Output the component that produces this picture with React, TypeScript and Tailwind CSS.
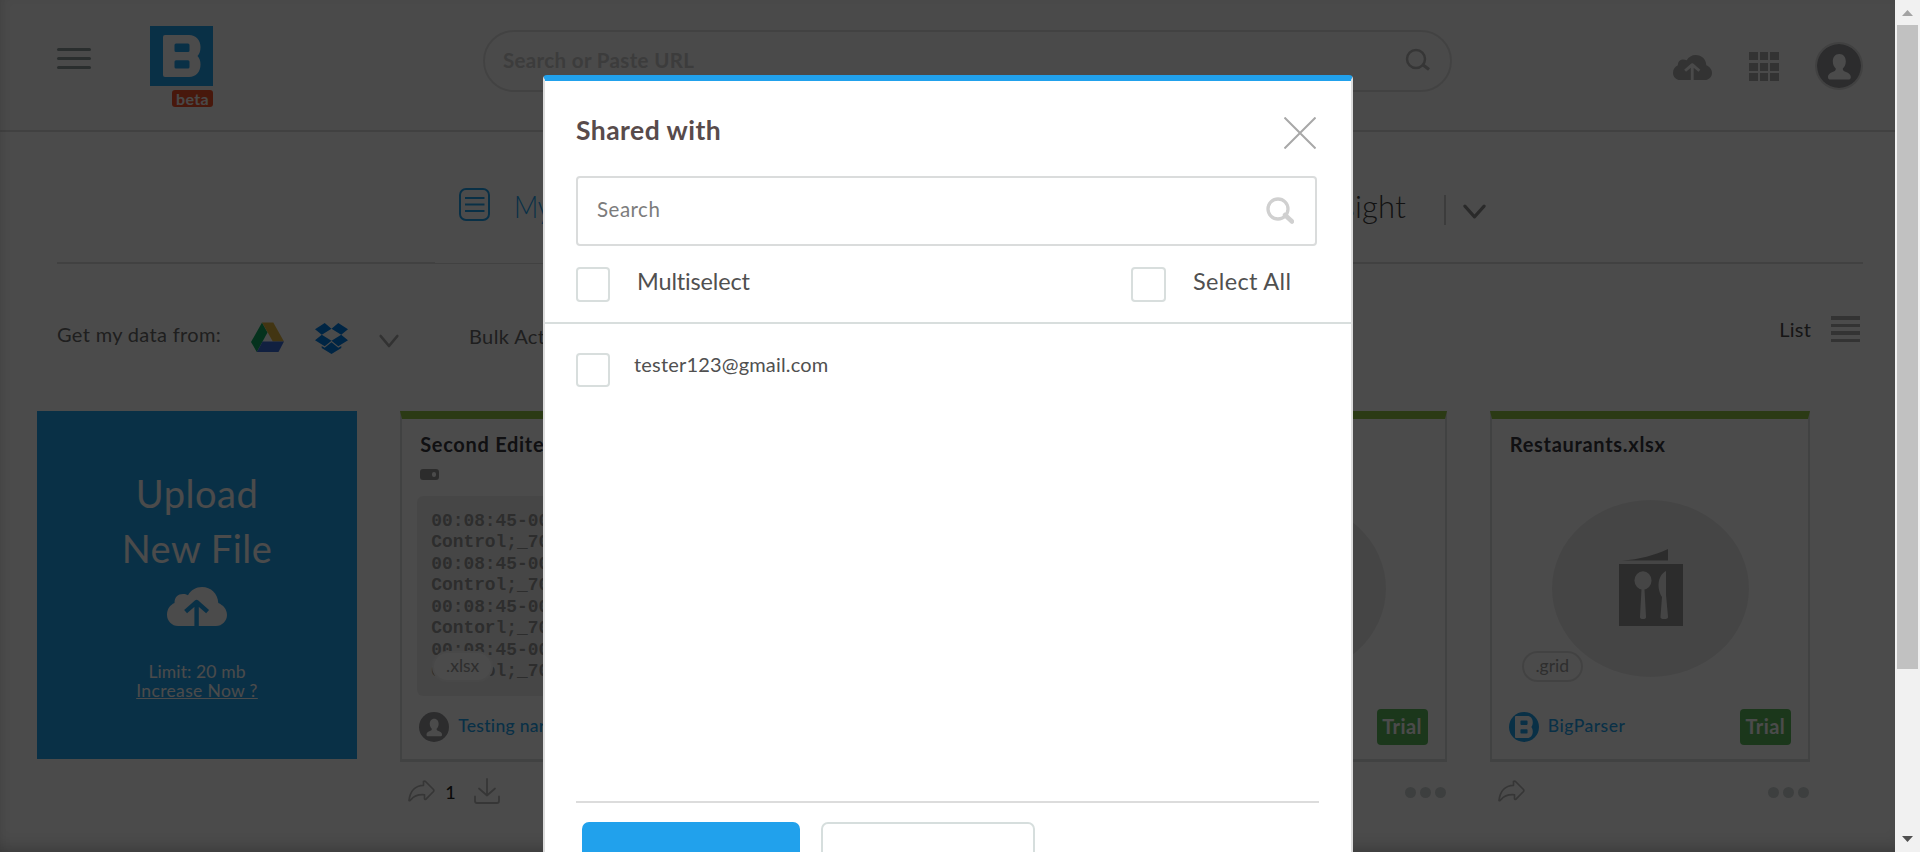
import React from "react";

const CloudIcon = ({ className, arrow }: { className: string; arrow: string }) => (
  <svg className={className} viewBox="0 0 60 39" fill="currentColor" preserveAspectRatio="none">
    <path d="M11 39C5 39 0 34 0 28C0 22 3 18 7.5 16C7.5 10 11 7 16 7C18 7 19.5 7.3 21 8.2C24 3 29 0 35 0C44 0 50.8 6.5 51.3 16C56 18 60 22 60 28C60 34 55 39 49 39Z" />
    <path d="M29.6 39.5V16M18.6 24.6L29.6 15L40.6 24.6" fill="none" stroke={arrow} strokeWidth="4.4" strokeLinecap="butt" strokeLinejoin="round" />
  </svg>
);

const UserIcon = ({ className }: { className: string }) => (
  <svg className={className} viewBox="0 0 44 44" preserveAspectRatio="none">
    <circle cx="22" cy="22" r="22" fill="#939397" />
    <path d="M22.3 10C18 10 15.8 13.4 15.8 17.5C15.8 20.7 17.3 23 18.8 24.6C18.8 26 18.4 27 16.8 27.6C13.4 29 11 30.2 11 33.2C11 34.8 12 35.6 13.6 35.6H31C32.8 35.6 33.8 34.8 33.8 33.2C33.8 30.2 31.2 29 27.8 27.6C26.2 27 25.8 26 25.8 24.6C27.4 23 28.8 20.7 28.8 17.5C28.8 13.4 26.6 10 22.3 10Z" fill="#fbfbfb" />
  </svg>
);

const LogoMark = ({ className }: { className: string }) => (
  <svg className={className} viewBox="0 0 38 42" fill="#fbfbfb" fillRule="evenodd" preserveAspectRatio="none">
    <path d="M2 0H26C33 0 37.5 5 37.5 12C37.5 16 36.5 19 34.5 21C36.5 23 37.5 26 37.5 29.500C37.500 37 33 42 26 42H2Q0 42 0 40V2Q0 0 2 0ZM13 8.500Q11.500 8.500 11.500 10V15.500Q11.500 17 13 17H25Q26.500 17 26.500 15.500V10Q26.500 8.500 25 8.500ZM13 25.200Q11.500 25.200 11.500 26.700V32Q11.500 33.500 13 33.500H25Q26.500 33.500 26.500 32V26.700Q26.500 25.200 25 25.200Z" />
  </svg>
);

const ShareIcon = () => (
  <svg className="mt-[18px] h-[22px] w-[27px]" viewBox="0 0 27 22" fill="none" stroke="#b4b4b4" strokeWidth="1.7" strokeLinejoin="round">
    <path d="M1 20.500C2 11 7.500 5.500 15.500 5.300V1.500Q16.500 0.600 17.500 1.500L25.500 9.500Q26.200 10.500 25.500 11.500L18 19.200Q16.800 20 16.500 18.800V14.800C10 14.300 6 15.800 3 19.600Q1.800 21.300 1 20.500Z" />
  </svg>
);

const Chevron = ({ className, width }: { className: string; width: number }) => (
  <svg className={className} viewBox="0 0 22 14" fill="none" stroke="currentColor" strokeWidth={width} strokeLinecap="round" strokeLinejoin="round" preserveAspectRatio="none">
    <path d="M1.800 2L11 12L20.200 2" />
  </svg>
);

const Dots = () => (
  <div className="mt-[25px] mr-px ml-auto flex gap-[4px]">
    <span className="h-[11px] w-[11px] rounded-full bg-[#cdd2d2]" />
    <span className="h-[11px] w-[11px] rounded-full bg-[#cdd2d2]" />
    <span className="h-[11px] w-[11px] rounded-full bg-[#cdd2d2]" />
  </div>
);

const Card = ({ title, children, footer, actions }: { title: string; children: React.ReactNode; footer: React.ReactNode; actions: React.ReactNode }) => (
  <div className="w-[320px] shrink-0">
    <div className="flex h-[351px] flex-col border-x-2 border-t-8 border-b-[3px] border-[#dadcdc] border-t-[#8fc146]">
      <h3 className="mt-[13px] ml-[18px] h-6 text-[20px] leading-6 font-bold tracking-[0.7px] whitespace-nowrap text-[#38383e]">{title}</h3>
      {children}
      <div className="flex h-[63px] items-start pr-[17px] pl-[17px]">{footer}</div>
    </div>
    <div className="flex items-start pl-[8px]">{actions}</div>
  </div>
);

const Trial = () => (
  <span className="mt-[13px] ml-auto flex h-9 w-[51px] justify-center rounded-[4px] bg-[#5cb85c] pt-[5px] text-[20px] leading-6 font-bold tracking-[0.4px] text-[#fafafa]">Trial</span>
);

const Dish = () => (
  <div className="relative mt-[44px] mb-[19px] flex h-[177px] justify-center pl-[2px]">
    <div className="flex h-[177px] w-[197px] justify-center rounded-[50%] bg-[#e8e8e8] pt-[49px]">
      <svg className="h-[78px] w-[64px]" viewBox="0 0 64 78">
        <path d="M3 11.500C20 10.500 36 6 49 0V11.500ZM0 15H64V77H0Z" fill="#949494" />
        <ellipse cx="24" cy="31.500" rx="8.500" ry="9.200" fill="#e8e8e8" />
        <path d="M22.600 39H25.400L27 68Q27 70 24 70Q21 70 21 68ZM47 22V46L49 68Q49 70 45.200 70Q41.500 70 41.500 68L43 48C38 40 38 27 47 22Z" fill="#e8e8e8" />
      </svg>
    </div>
    <span className="absolute top-[151px] left-[30px] flex h-[31px] w-[61px] justify-center rounded-full border-2 border-[#dedede] bg-[#fbfbfb] pt-px text-[17.5px] leading-6 text-[#9a9a9a]">.grid</span>
  </div>
);

const logLines = ["00:08:45-00", "Control;_70", "00:08:45-00", "Control;_70", "00:08:45-00", "Contorl;_70", "00:08:45-00", "Control;_70"];

const BigParser = () => (
  <>
    <span className="mt-[16px] flex h-[30px] w-[30px] items-center justify-center rounded-full bg-[#21a1ec]">
      <LogoMark className="h-[22px] w-[18px]" />
    </span>
    <span className="mt-[18px] ml-[9px] text-[17.5px] leading-6 font-medium tracking-[0.5px] text-[#21a1ec]">BigParser</span>
    <Trial />
  </>
);

const Page = () => (
  <div className="flex h-[852px] w-[1895px] flex-col bg-[#fcfcfc]">
    <header className="flex h-[132px] shrink-0 items-start border-b-2 border-[#dadada] bg-[#f8f8f8]">
      <div className="mt-[48px] ml-[57px] flex w-[34px] flex-col gap-[6px]">
        <span className="h-[3px] rounded-full bg-[#8c9999]" />
        <span className="h-[3px] rounded-full bg-[#8c9999]" />
        <span className="h-[3px] rounded-full bg-[#8c9999]" />
      </div>
      <div className="mt-[26px] ml-[59px] flex w-[63px] flex-col items-end">
        <div className="flex h-[60px] w-[63px] justify-center bg-[#21a1ec] pt-[9px]">
          <LogoMark className="h-[42px] w-[38px]" />
        </div>
        <div className="mt-[4px] h-[17px] w-[41px] rounded-[3px] bg-[#f0522a] text-center text-[16px] leading-[17px] font-bold tracking-[0.3px] text-[#f5f5f5]">beta</div>
      </div>
      <div className="mt-[30px] ml-[270px] flex h-[62px] w-[969px] items-start justify-between rounded-full border-2 border-[#dedede] pr-[19px] pl-[18px]">
        <span className="mt-[16px] text-[20.5px] leading-6 font-bold tracking-[0.35px] text-[#c8c8c8]">Search or Paste URL</span>
        <svg className="mt-[16px] h-[24px] w-[26px]" viewBox="0 0 26 24" fill="none" stroke="#b4b4b4">
          <circle cx="11" cy="11" r="9" strokeWidth="2.500" />
          <path d="M17.500 16.500L24 21.500" strokeWidth="3.200" />
        </svg>
      </div>
      <CloudIcon className="mt-[55px] ml-[221px] h-[25px] w-[39px] text-[#aaaaaa]" arrow="#f8f8f8" />
      <div className="mt-[52px] ml-[37px] grid grid-cols-3 gap-x-[2px] gap-y-[2.5px]">
        {Array.from({ length: 9 }, (_, i) => (
          <span key={i} className="h-2 w-[8.5px] bg-[#aaaaaa]" />
        ))}
      </div>
      <div className="mt-[42px] ml-[36.500px] rounded-full border-2 border-[#dadada]">
        <UserIcon className="h-[44px] w-[44px]" />
      </div>
    </header>

    <nav className="flex h-[132px] w-full shrink-0 flex-col">
      <div className="flex h-[130px] items-start">
        <svg className="mt-[56px] ml-[459px] h-[33px] w-[31px]" viewBox="0 0 31 33" fill="none" stroke="#21a1ec" strokeWidth="2">
          <rect x="1" y="1" width="29" height="31" rx="6" />
          <path d="M6 10H25.500M6 16.500H25.500M6 23H25.500" />
        </svg>
        <span className="mt-[56px] ml-[24px] origin-left scale-x-[0.86] text-[31px] leading-9 font-light text-[#21a1ec]">My</span>
        <span className="mt-[56px] ml-auto text-[31px] leading-9 font-light tracking-[0.2px] text-[#3c3c3c]">Insight</span>
        <span className="mt-[63px] ml-[38px] h-[30px] w-[2px] bg-[#c8c8c8]" />
        <Chevron className="mt-[72px] mr-[409px] ml-[17px] h-[15px] w-[23px] text-[#8c8c8c]" width={3} />
      </div>
      <div className="mr-[32px] ml-[57px] flex h-[2px] items-end">
        <span className="h-[2px] w-[378px] bg-[#dadada]" />
        <span className="h-px w-[400px] bg-[#dadada]" />
        <span className="h-[2px] flex-1 bg-[#dadada]" />
      </div>
    </nav>

    <div className="flex h-[147px] shrink-0 items-start pl-[57px]">
      <span className="mt-[58px] w-[194px] text-[20px] leading-6 tracking-[0.34px] text-[#686868]">Get my data from:</span>
      <svg className="mt-[58px] h-[31px] w-[33px]" viewBox="0 0 33 31" preserveAspectRatio="none">
        <path d="M11 0.500L16.500 10.500L5.800 30L0 20Z" fill="#11a861" />
        <path d="M11 0.500H22.300L33 19.500H21.800Z" fill="#ddb23e" />
        <path d="M11.600 19.500H33L27.500 30H5.800Z" fill="#3b6bd8" />
      </svg>
      <svg className="mt-[59px] ml-[31px] h-[31px] w-[33px]" viewBox="0 0 33 31" fill="#007ee5" preserveAspectRatio="none">
        <path d="M9.700 0L16.500 5.700L6.800 11.700L0 6.200ZM23.300 0L16.500 5.700L26.200 11.700L33 6.200ZM0 17.200L6.800 11.700L16.500 17.800L9.700 23.300ZM33 17.200L26.200 11.700L16.500 17.800L23.300 23.300ZM16.500 19.200L23.300 24.700L26.300 22.900V25.100L16.500 31L6.700 25.100V22.900L9.700 24.700Z" />
      </svg>
      <Chevron className="mt-[70px] ml-[31px] h-[14px] w-[20px] text-[#a8a8a8]" width={2.6} />
      <span className="mt-[60px] ml-[70px] text-[20px] leading-6 tracking-[0.4px] text-[#686868]">Bulk Act</span>
      <span className="mt-[53px] ml-auto text-[20px] leading-6 tracking-[0.2px] text-[#4a4a4a]">List</span>
      <div className="mt-[52px] mr-[35px] ml-[20px] flex w-[29px] flex-col gap-[4px]">
        <span className="h-[3.500px] bg-[#aaaaaa]" />
        <span className="h-[3.500px] bg-[#aaaaaa]" />
        <span className="h-[3.500px] bg-[#aaaaaa]" />
        <span className="h-[3.500px] bg-[#aaaaaa]" />
      </div>
    </div>

    <main className="flex items-start gap-[43.200px] overflow-hidden pl-[37px]">
      <div className="flex h-[348px] w-[320px] shrink-0 flex-col items-center bg-[#21a1ec] pt-[55px] text-[#fafafa]">
        <p className="text-center text-[38px] leading-[55px] tracking-[0.5px]">
          Upload
          <br />
          New File
        </p>
        <CloudIcon className="mt-[11px] h-[39px] w-[60px]" arrow="#21a1ec" />
        <p className="mt-[36px] text-center text-[17.500px] leading-[19px] tracking-[0.1px]">
          Limit: 20 mb
          <br />
          <span className="tracking-[0.35px] underline">Increase Now ?</span>
        </p>
      </div>

      <Card
        title="Second Edited"
        footer={
          <>
            <UserIcon className="mt-[16px] h-[30px] w-[30px]" />
            <span className="mt-[18px] ml-[9px] text-[17.500px] leading-6 font-medium tracking-[0.3px] text-[#21a1ec]">Testing nar</span>
          </>
        }
        actions={
          <>
            <ShareIcon />
            <span className="mt-[18px] ml-[10px] w-[9px] text-[18px] leading-6 font-medium text-[#222]">1</span>
            <svg className="mt-[16px] ml-[20px] h-[26px] w-[26px]" viewBox="0 0 26 26" fill="none" stroke="#b4b4b4" strokeWidth="1.800" strokeLinecap="round" strokeLinejoin="round">
              <path d="M13 1V17.500M5 10.500L13 17.500L21 10.500M1 18.500V23Q1 25 3 25H23Q25 25 25 23V18.500" />
            </svg>
          </>
        }
      >
        <div className="mt-[13px] ml-[18px] flex h-[11px] w-[19px] items-center justify-end rounded-[3px] bg-[#949494] pr-[3px]">
          <span className="h-[5px] w-[4px] rounded-full bg-[#fafafa]" />
        </div>
        <div className="relative mt-[16px] ml-[15px] h-[200px] w-[286px] rounded-[6px] bg-[#ececec] pt-[14.500px] pl-[14px] font-['Liberation_Mono',monospace] text-[17.900px] leading-[21.500px] font-bold text-[#989898]">
          {logLines.map((line, i) => (
            <div key={i}>{line}</div>
          ))}
          <span className="absolute top-[155px] left-[15px] flex h-[31px] w-[61px] justify-center rounded-full border-2 border-[#f0f0f0] bg-[#fbfbfb] pt-px font-[Lato,sans-serif] text-[17.500px] leading-6 font-normal text-[#9a9a9a]">.xlsx</span>
        </div>
      </Card>
      <Card title="" footer={null} actions={<ShareIcon />}>
        {null}
      </Card>
      <Card title="" footer={<Trial />} actions={<><ShareIcon /><Dots /></>}>
        <Dish />
      </Card>
      <Card title="Restaurants.xlsx" footer={<BigParser />} actions={<><ShareIcon /><Dots /></>}>
        <Dish />
      </Card>
    </main>
  </div>
);

const Modal = () => (
  <div className="absolute top-[75px] left-[543px] flex h-[777px] w-[810px] flex-col overflow-hidden rounded-t-[4px] border-x-2 border-t-6 border-[#dcdcdc] border-t-[#21a1ec] bg-white">
    <div className="flex shrink-0 items-start justify-between pr-[35px] pl-[31px]">
      <h2 className="mt-[33px] text-[26.500px] leading-8 font-bold tracking-[0.45px] text-[#584b4b]">Shared with</h2>
      <svg className="mt-[36px] h-[32px] w-[32px]" viewBox="0 0 32 32" stroke="#a8a8a8" strokeWidth="2">
        <path d="M0.500 0.500L31.500 31.500M31.500 0.500L0.500 31.500" />
      </svg>
    </div>
    <div className="mt-[27px] ml-[31px] flex h-[70px] w-[741px] shrink-0 items-start justify-between rounded-[4px] border-2 border-[#dadcdc] pr-[21px] pl-[19px]">
      <span className="mt-[19px] text-[20.500px] leading-6 tracking-[0.5px] text-[#7c7c7c]">Search</span>
      <svg className="mt-[19px] h-[27px] w-[28px]" viewBox="0 0 28 27" fill="none" stroke="#d0d0d0">
        <circle cx="12" cy="12" r="10" strokeWidth="3.300" />
        <path d="M19 18L26 24.500" strokeWidth="4.500" strokeLinecap="round" />
      </svg>
    </div>
    <div className="flex h-[78px] shrink-0 items-start border-b-2 border-[#d8dedd] pt-[21px] pl-[31px] text-[23.500px] leading-[29px] text-[#505050]">
      <span className="h-[35px] w-[34px] shrink-0 rounded-[4px] border-2 border-[#d8dedd]" />
      <span className="ml-[27px] tracking-[-0.15px]">Multiselect</span>
      <span className="mr-[27px] ml-auto block h-[35px] w-[35px] rounded-[4px] border-2 border-[#d8dedd]" />
      <span className="w-[158px] tracking-[0.35px]">Select All</span>
    </div>
    <div className="flex h-[477px] shrink-0 items-start pt-[29px] pl-[31px] text-[20px] leading-[23px] text-[#505050]">
      <span className="h-[34px] w-[34px] shrink-0 rounded-[4px] border-2 border-[#d8dedd]" />
      <span className="ml-[24px] tracking-[0.18px]">tester123@gmail.com</span>
    </div>
    <div className="ml-[31px] h-[2px] w-[743px] shrink-0 bg-[#dcdcdc]" />
    <div className="mt-[19px] ml-[37px] flex shrink-0 gap-[21px]">
      <div className="h-[60px] w-[218px] rounded-[7px] bg-[#21a1ec]" />
      <div className="h-[60px] w-[214px] rounded-[7px] border-2 border-[#d6dedd]" />
    </div>
  </div>
);

export default function App() {
  return (
    <div className="relative flex h-[852px] w-[1920px] overflow-hidden font-[Lato,sans-serif]">
      <Page />
      <div className="absolute inset-y-0 left-0 w-[1895px] bg-black/70 shadow-[inset_0_-14px_16px_-10px_rgba(0,0,0,0.2),inset_6px_0_14px_-8px_rgba(0,0,0,0.12)]" />
      <Modal />
      <div className="flex h-[852px] w-[25px] flex-col items-center bg-[#f1f1f1]">
        <svg className="mt-[10px] h-[6px] w-[11px]" viewBox="0 0 11 6"><path d="M0 6L5.500 0L11 6Z" fill="#a3a3a3" /></svg>
        <div className="mt-[9px] h-[644px] w-[21px] bg-[#c1c1c1]" />
        <svg className="mt-auto mb-[10px] h-[6px] w-[11px]" viewBox="0 0 11 6"><path d="M0 0L5.500 6L11 0Z" fill="#505050" /></svg>
      </div>
    </div>
  );
}
